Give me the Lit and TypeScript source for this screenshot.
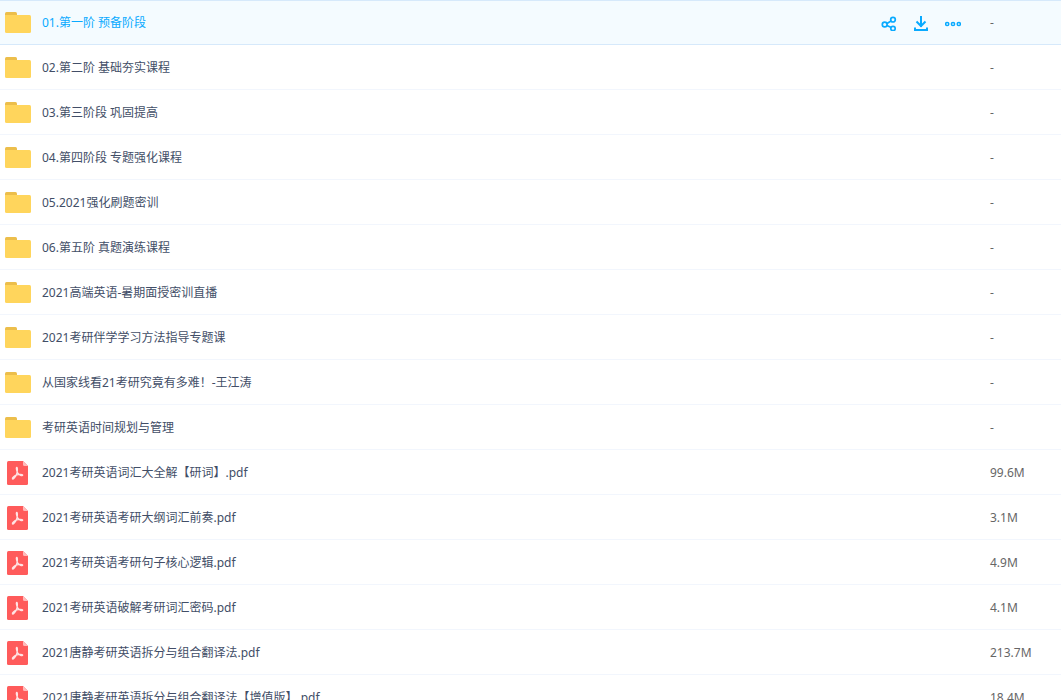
import { LitElement, html, css, svg, nothing } from "lit";
import { customElement, property } from "lit/decorators.js";

type Kind = "folder" | "pdf";

interface Entry {
  name: string;
  kind: Kind;
  size: string;
}

const folder = (name: string): Entry => ({ name, kind: "folder", size: "-" });
const pdf = (name: string, size: string): Entry => ({ name, kind: "pdf", size });

const ENTRIES: Entry[] = [
  folder("01.第一阶 预备阶段"),
  folder("02.第二阶 基础夯实课程"),
  folder("03.第三阶段 巩固提高"),
  folder("04.第四阶段 专题强化课程"),
  folder("05.2021强化刷题密训"),
  folder("06.第五阶 真题演练课程"),
  folder("2021高端英语-暑期面授密训直播"),
  folder("2021考研伴学学习方法指导专题课"),
  folder("从国家线看21考研究竟有多难！-王江涛"),
  folder("考研英语时间规划与管理"),
  pdf("2021考研英语词汇大全解【研词】.pdf", "99.6M"),
  pdf("2021考研英语考研大纲词汇前奏.pdf", "3.1M"),
  pdf("2021考研英语考研句子核心逻辑.pdf", "4.9M"),
  pdf("2021考研英语破解考研词汇密码.pdf", "4.1M"),
  pdf("2021唐静考研英语拆分与组合翻译法.pdf", "213.7M"),
  pdf("2021唐静考研英语拆分与组合翻译法【增值版】.pdf", "18.4M"),
];

@customElement("file-icon")
export class FileIcon extends LitElement {
  @property() kind: Kind = "folder";

  static styles = css`
    :host {
      display: block;
      width: 26px;
    }
    svg {
      display: block;
    }
  `;

  render() {
    return this.kind === "folder"
      ? html`<svg width="26" height="24" viewBox="0 -1 26 24" aria-hidden="true">
          <path d="M0 6V1.5Q0 0 1.5 0h9Q12 0 12 1.5V6z" fill="#ecbe4b" />
          <path d="M0 3h24.5Q26 3 26 4.5v15q0 1.5-1.5 1.5h-23Q0 21 0 19.5z" fill="#ffd55c" />
        </svg>`
      : html`<svg width="26" height="24" viewBox="-2 0 26 24" aria-hidden="true">
          <path d="M1.5 0H16l5 5v17.5q0 1.5-1.5 1.5h-18Q0 24 0 22.5v-21Q0 0 1.5 0z" fill="#ff5b5b" />
          <path d="M16 0l5 5h-3.5Q16 5 16 3.5z" fill="#ffbcbc" />
          <path
            d="M9.800 6.500c-1 0-.1 3.800 1 5.700 1 1.700 4.700 3.200 4.900 2 .1-1.100-4.100-.8-6-.3-2 .7-4.800 3-4.300 3.900.7 1 3.300-2.200 4.200-4.600.8-2 1.200-6.700.2-6.700z"
            fill="none"
            stroke="#ffe4e4"
            stroke-width="1.300"
            stroke-linejoin="round"
          />
        </svg>`;
  }
}

const shareGlyph = svg`
  <g fill="none" stroke="currentColor" stroke-width="1.700">
    <circle cx="3.700" cy="9.500" r="2.400" />
    <circle cx="12" cy="4.700" r="2.300" />
    <circle cx="12" cy="13.500" r="2.200" />
    <path d="M6 8.500L10 6M6 10.400l4.200 2" />
  </g>`;

const downloadGlyph = svg`
  <g fill="none" stroke="currentColor" stroke-width="2">
    <path d="M8 1v11M3.500 6.500L8 11 12.500 6.500" />
    <path d="M2 12.500V16M1 15h14M14 12.500V16" />
  </g>`;

const moreGlyph = svg`
  <g fill="none" stroke="currentColor" stroke-width="1.500">
    <circle cx="2.200" cy="9" r="1.600" />
    <circle cx="8" cy="9" r="1.600" />
    <circle cx="13.800" cy="9" r="1.600" />
  </g>`;

const ACTIONS = [
  { label: "分享", glyph: shareGlyph },
  { label: "下载", glyph: downloadGlyph },
  { label: "更多", glyph: moreGlyph },
];

@customElement("app-root")
export class AppRoot extends LitElement {
  @property({ type: Number }) active = 0;

  static styles = css`
    :host {
      display: block;
      height: 100vh;
      overflow: hidden;
      background: #fff;
      color: #424e67;
      font: 12px/18px "Noto Sans", "Noto Sans CJK SC", sans-serif;
    }
    .files {
      width: 100%;
      table-layout: fixed;
      border-spacing: 0;
    }
    .size-column {
      width: 71px;
    }
    .cell {
      box-sizing: border-box;
      height: 45px;
      padding: 2px 0 0;
      border-bottom: 1px solid #f2f6fd;
      text-align: left;
      font-weight: normal;
      vertical-align: middle;
    }
    .active .cell {
      padding-top: 1px;
      border-top: 1px solid #d6e9fb;
      border-bottom-color: #d6e9fb;
      background: #f4fbff;
    }
    .entry {
      display: flex;
      align-items: center;
      gap: 11px;
      padding: 0 29px 0 5px;
    }
    .name {
      flex: 1;
      min-width: 0;
      overflow: hidden;
      text-overflow: ellipsis;
      white-space: nowrap;
      color: inherit;
      text-decoration: none;
    }
    .active .name,
    .actions {
      color: #09aaff;
    }
    .actions {
      display: flex;
      gap: 16px;
    }
    .action {
      width: 16px;
      height: 16px;
      padding: 0;
      border: 0;
      background: none;
      color: inherit;
      cursor: pointer;
    }
    .action svg {
      display: block;
    }
    .size {
      color: #666;
    }
  `;

  private renderActions() {
    return html`<div class="actions">
      ${ACTIONS.map(
        (a) => html`<button class="action" type="button" aria-label=${a.label}>
          <svg width="16" height="16" viewBox="0 0 16 16" aria-hidden="true">${a.glyph}</svg>
        </button>`
      )}
    </div>`;
  }

  render() {
    return html`<table class="files">
      <colgroup>
        <col />
        <col class="size-column" />
      </colgroup>
      <tbody>
        ${ENTRIES.map(
          (e, i) => html`<tr class=${i === this.active ? "active" : ""}>
            <th class="cell" scope="row">
              <div class="entry">
                <file-icon kind=${e.kind}></file-icon>
                <a class="name" href="#">${e.name}</a>
                ${i === this.active ? this.renderActions() : nothing}
              </div>
            </th>
            <td class="cell size">${e.size}</td>
          </tr>`
        )}
      </tbody>
    </table>`;
  }
}
